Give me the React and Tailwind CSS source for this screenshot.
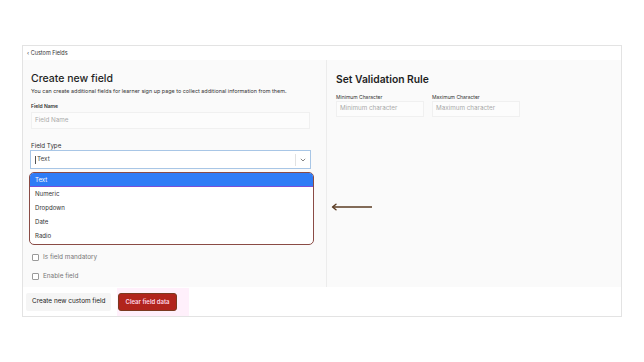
import React from "react";

const font = { fontFamily: "Inter, 'Liberation Sans', sans-serif" };

const options = ["Text", "Numeric", "Dropdown", "Date", "Radio"];

const Checkbox = ({ label }) => (
  <div className="flex items-center gap-[4px] h-[10px]">
    <span className="w-[7px] h-[7px] border border-[#9a9a9a] rounded-[1px] bg-white" />
    <span className="text-[6.4px] leading-none text-[#777]">{label}</span>
  </div>
);

export default function App() {
  return (
    <div className="w-[644px] h-[362px] bg-white overflow-hidden" style={font}>
      <div className="ml-[22px] mt-[45px] w-[600px] h-[272px] border border-[#e3e3e3] flex flex-col">
        {/* header */}
        <div className="h-[14px] flex items-center px-[4px] text-[5.5px] text-[#333] bg-white">
          <span>‹ Custom Fields</span>
        </div>

        {/* body */}
        <div className="flex h-[227px] bg-[#fafafa]">
          {/* left */}
          <div className="w-[304px] border-r border-[#ececec] pl-[8px] pr-[16px]">
            <h1 className="pt-[13px] text-[10.5px] leading-[12px] text-[#1f1f1f] font-medium">
              Create new field
            </h1>
            <p className="mt-[3px] text-[5.45px] leading-[6px] text-[#333] whitespace-nowrap">
              You can create additional fields for learner sign up page to collect additional information from them.
            </p>

            <div className="mt-[9px] text-[5px] leading-[6px] font-semibold text-[#333]">Field Name</div>
            <div className="mt-[3px] h-[17px] border border-[#f0f0f0] bg-[#fcfcfc] flex items-center px-[3px] text-[6.3px] text-[#aaa]">
              Field Name
            </div>

            <div className="mt-[13px] text-[6.2px] leading-[8px] text-[#333]">Field Type</div>
            <div className="-ml-[1px] h-[19px] w-[281px] border border-[#a8c6e6] bg-white flex items-center">
              <div className="flex-1 flex items-center pl-[4px] text-[6.3px] text-[#444]">
                <span className="w-px h-[8px] bg-[#555] mr-[1px]" />
                Text
              </div>
              <div className="w-px h-[12px] bg-[#e2e2e2]" />
              <div className="w-[14px] flex items-center justify-center">
                <svg width="6" height="4" viewBox="0 0 6 4" fill="none">
                  <path d="M0.8 0.8 L3 3 L5.2 0.8" stroke="#777" strokeWidth="0.9" />
                </svg>
              </div>
            </div>

            <div className="mt-[3px] -ml-[2px] w-[285px] h-[73px] rounded-[5px] border border-[#8a4b45] bg-white overflow-hidden">
              {options.map((o, i) => (
                <div
                  key={o}
                  className={
                    i === 0
                      ? "h-[14px] flex items-center pl-[5px] text-[6.1px] text-white bg-[#2f7cf6] border-b border-[#7a4fd6]"
                      : "h-[14px] flex items-center pl-[5px] text-[6.1px] text-[#333]"
                  }
                >
                  {o}
                </div>
              ))}
            </div>

            <div className="mt-[7px] ml-[1px] flex flex-col gap-[9px]">
              <Checkbox label="Is field mandatory" />
              <Checkbox label="Enable field" />
            </div>
          </div>

          {/* right */}
          <div className="flex-1 pl-[9px] relative">
            <h2 className="pt-[13px] text-[10.3px] leading-[12px] font-semibold text-[#1f1f1f]">
              Set Validation Rule
            </h2>
            <div className="mt-[9px] flex gap-[8px]">
              <div className="w-[88px]">
                <div className="text-[5px] leading-[6px] text-[#333]">Minimum Character</div>
                <div className="mt-[1px] h-[16px] border border-[#f0f0f0] bg-[#fcfcfc] flex items-center px-[3px] text-[6.3px] text-[#aaa]">
                  Minimum character
                </div>
              </div>
              <div className="w-[88px]">
                <div className="text-[5px] leading-[6px] text-[#333]">Maximum Character</div>
                <div className="mt-[1px] h-[16px] border border-[#f0f0f0] bg-[#fcfcfc] flex items-center px-[3px] text-[6.3px] text-[#aaa]">
                  Maximum character
                </div>
              </div>
            </div>
            <svg
              className="absolute left-[2px] top-[142px]"
              width="48"
              height="10"
              viewBox="0 0 48 10"
              fill="none"
            >
              <path d="M4 5 H43" stroke="#5a3b22" strokeWidth="1.4" />
              <path d="M7 2.2 L3.5 5 L7 7.8" stroke="#5a3b22" strokeWidth="1.4" strokeLinecap="round" strokeLinejoin="round" />
            </svg>
          </div>
        </div>

        {/* footer */}
        <div className="flex-1 bg-white flex items-center pl-[3px] gap-[6px]">
          <button className="h-[18px] px-[6px] bg-[#f5f5f5] text-[6.4px] text-[#222] rounded-[2px]">
            Create new custom field
          </button>
          <div className="bg-[#fff0fb] px-[1px] h-[28px] flex items-center pr-[12px]">
            <button className="h-[18px] px-[6px] bg-[#b1241c] border border-[#7a3a20] text-[6px] font-semibold text-[#ffd6e6] rounded-[3px]">
              Clear field data
            </button>
          </div>
        </div>
      </div>
    </div>
  );
}
